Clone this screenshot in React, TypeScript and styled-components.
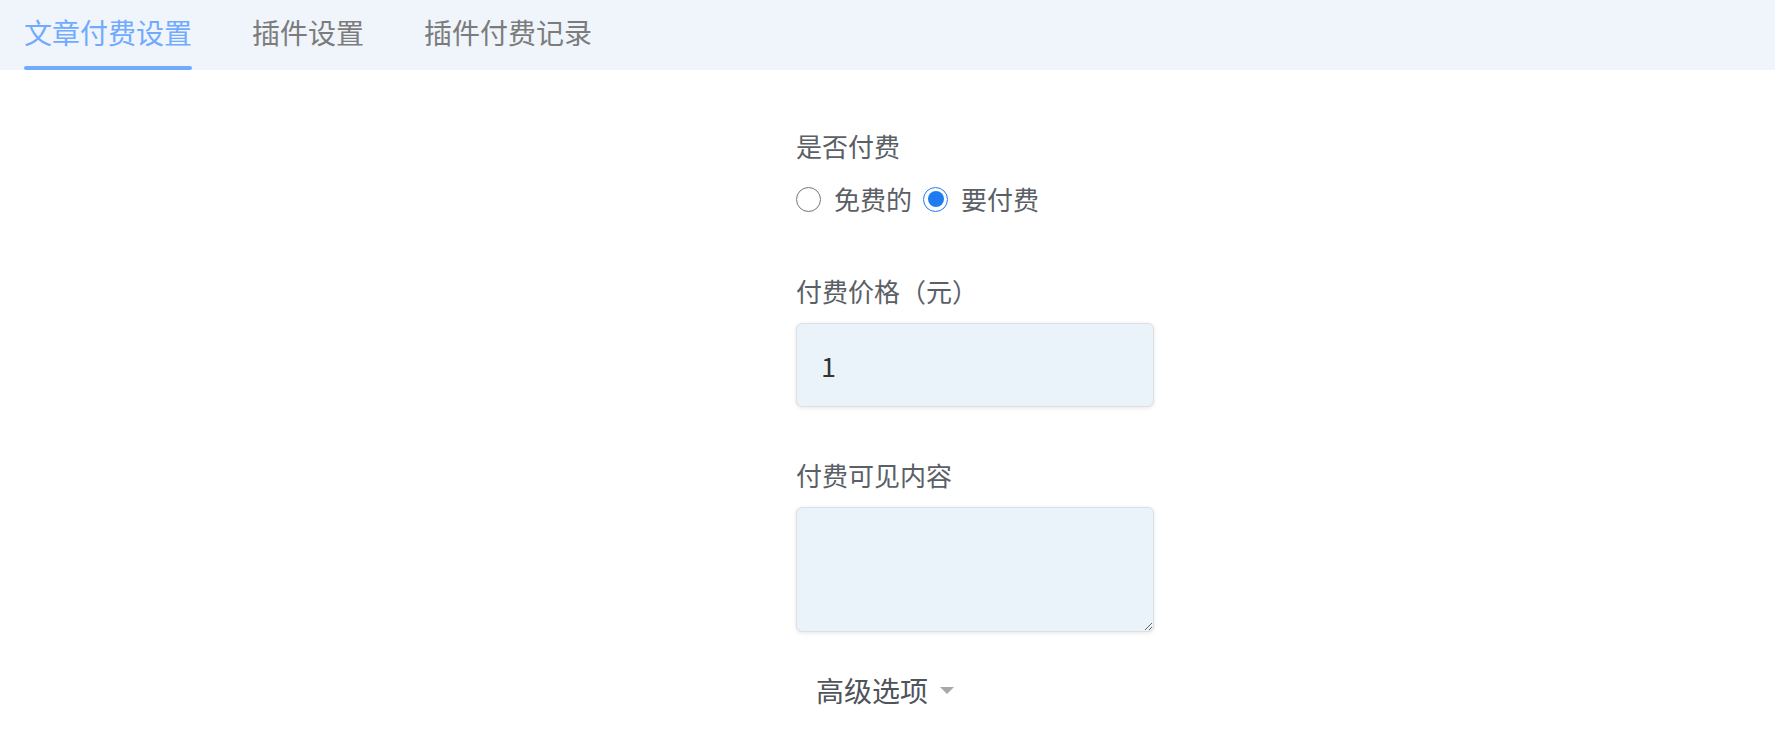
import React, { useState } from "react";
import styled, { createGlobalStyle } from "styled-components";

const GlobalStyle = createGlobalStyle`
  html, body { margin: 0; padding: 0; background: #ffffff; }
  body { font-family: "Noto Sans CJK SC", "Noto Sans", sans-serif; }
  * { box-sizing: border-box; }
`;

const Page = styled.div`
  width: 100%;
  min-height: 749px;
  background: #ffffff;
`;

const TabBar = styled.nav`
  display: flex;
  align-items: stretch;
  gap: 60px;
  height: 70px;
  padding-left: 24px;
  background: #f0f5fc;
`;

const Tab = styled.button<{ $active?: boolean }>`
  position: relative;
  display: flex;
  align-items: flex-start;
  padding: 13px 0 0;
  border: none;
  background: transparent;
  font-family: inherit;
  font-size: 28px;
  line-height: 38px;
  color: ${(p) => (p.$active ? "#72aaff" : "#7c7c7c")};
  cursor: pointer;

  &::after {
    content: "";
    display: ${(p) => (p.$active ? "block" : "none")};
    position: absolute;
    left: 0;
    right: 0;
    bottom: 0;
    height: 4px;
    border-radius: 2px;
    background: #72aaff;
  }
`;

const Form = styled.form`
  display: flex;
  flex-direction: column;
  width: 358px;
  margin-left: 796px;
  padding-top: 61px;
`;

const Field = styled.div<{ $gap?: number }>`
  display: flex;
  flex-direction: column;
  margin-bottom: ${(p) => p.$gap ?? 0}px;
`;

const Label = styled.label<{ $space: number }>`
  font-size: 26px;
  line-height: 30px;
  color: #5b5f66;
  margin-bottom: ${(p) => p.$space}px;
`;

const RadioRow = styled.div`
  display: flex;
  align-items: center;
  height: 30px;
`;

const RadioOption = styled.label`
  display: flex;
  align-items: center;
  font-size: 26px;
  line-height: 30px;
  color: #5b5f66;
  cursor: pointer;
  margin-right: 11px;
`;

const RadioCircle = styled.span<{ $checked?: boolean }>`
  position: relative;
  width: 25px;
  height: 25px;
  border-radius: 50%;
  border: 1.6px solid ${(p) => (p.$checked ? "#1f7cf0" : "#767676")};
  background: #ffffff;
  margin-right: 13px;
  flex: none;

  &::after {
    content: "";
    display: ${(p) => (p.$checked ? "block" : "none")};
    position: absolute;
    inset: 3.5px;
    border-radius: 50%;
    background: #1f7cf0;
  }
`;

const HiddenRadio = styled.input`
  display: none;
`;

const TextInput = styled.input`
  width: 358px;
  height: 84px;
  padding: 0 24px;
  border: 1px solid #dcdfe3;
  border-radius: 6px;
  background: #ebf3fa;
  box-shadow: 0 1px 4px rgba(0, 0, 0, 0.1);
  font-family: inherit;
  font-size: 27px;
  color: #333333;
  outline: none;
`;

const TextArea = styled.textarea`
  width: 358px;
  height: 125px;
  padding: 12px 24px;
  border: 1px solid #dcdfe3;
  border-radius: 6px;
  background: #ebf3fa;
  box-shadow: 0 1px 4px rgba(0, 0, 0, 0.1);
  font-family: inherit;
  font-size: 25px;
  color: #333333;
  outline: none;
  resize: vertical;
`;

const Advanced = styled.button`
  display: flex;
  align-items: center;
  align-self: flex-start;
  gap: 12px;
  margin-left: 20px;
  padding: 0;
  border: none;
  background: transparent;
  font-family: inherit;
  font-size: 28px;
  line-height: 30px;
  color: #4f535a;
  cursor: pointer;
`;

const Caret = styled.span`
  width: 0;
  height: 0;
  border-left: 7px solid transparent;
  border-right: 7px solid transparent;
  border-top: 7px solid #a8a8a8;
`;

export default function App() {
  const [paid, setPaid] = useState(true);
  const [tab, setTab] = useState(0);
  const tabs = ["文章付费设置", "插件设置", "插件付费记录"];
  return (
    <Page>
      <GlobalStyle />
      <TabBar>
        {tabs.map((t, i) => (
          <Tab key={t} $active={i === tab} onClick={() => setTab(i)}>
            {t}
          </Tab>
        ))}
      </TabBar>
      <Form onSubmit={(e) => e.preventDefault()}>
        <Field $gap={62}>
          <Label $space={23}>是否付费</Label>
          <RadioRow>
            <RadioOption>
              <HiddenRadio type="radio" checked={!paid} onChange={() => setPaid(false)} />
              <RadioCircle $checked={!paid} />
              免费的
            </RadioOption>
            <RadioOption>
              <HiddenRadio type="radio" checked={paid} onChange={() => setPaid(true)} />
              <RadioCircle $checked={paid} />
              要付费
            </RadioOption>
          </RadioRow>
        </Field>
        <Field $gap={53}>
          <Label $space={17}>付费价格（元）</Label>
          <TextInput defaultValue="1" />
        </Field>
        <Field $gap={43}>
          <Label $space={17}>付费可见内容</Label>
          <TextArea />
        </Field>
        <Advanced type="button">
          高级选项
          <Caret />
        </Advanced>
      </Form>
    </Page>
  );
}
